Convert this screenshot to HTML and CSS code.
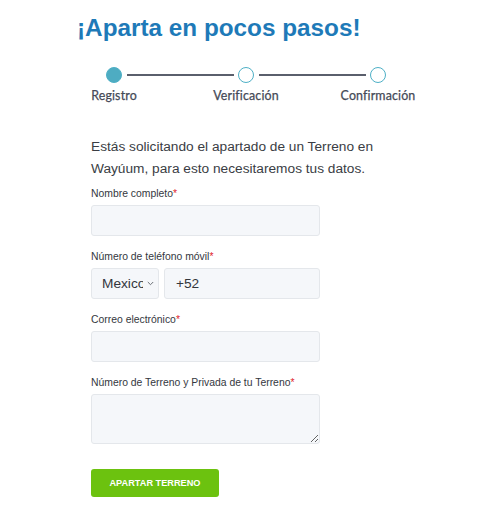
FILE: index.html
```html
<!DOCTYPE html>
<html lang="es">
<head>
<meta charset="utf-8">
<title>Aparta en pocos pasos</title>
<link rel="stylesheet" href="styles.css">
</head>
<body>
<main class="page">
  <h1 class="title">¡Aparta en pocos pasos!</h1>

  <div class="stepper">
    <div class="step step--active">
      <span class="dot"></span>
      <span class="step-label">Registro</span>
    </div>
    <span class="connector"></span>
    <div class="step">
      <span class="dot"></span>
      <span class="step-label">Verificación</span>
    </div>
    <span class="connector"></span>
    <div class="step">
      <span class="dot"></span>
      <span class="step-label">Confirmación</span>
    </div>
  </div>

  <form class="form">
    <p class="intro">Estás solicitando el apartado de un Terreno en Wayúum, para esto necesitaremos tus datos.</p>

    <div class="field">
      <label class="label">Nombre completo<span class="req">*</span></label>
      <input class="input" type="text">
    </div>

    <div class="field">
      <label class="label">Número de teléfono móvil<span class="req">*</span></label>
      <div class="phone-row">
        <div class="select-wrap">
          <select class="input select">
            <option>Mexico</option>
          </select>
          <svg class="chevron" width="7" height="5" viewBox="0 0 7 5"><path d="M0.8 1 L3.5 3.7 L6.2 1" fill="none" stroke="#6b6f76" stroke-width="1"/></svg>
        </div>
        <input class="input phone" type="text" value="+52">
      </div>
    </div>

    <div class="field">
      <label class="label">Correo electrónico<span class="req">*</span></label>
      <input class="input" type="text">
    </div>

    <div class="field">
      <label class="label">Número de Terreno y Privada de tu Terreno<span class="req">*</span></label>
      <textarea class="input textarea"></textarea>
    </div>

    <button class="submit" type="button">APARTAR TERRENO</button>
  </form>
</main>
</body>
</html>
```

FILE: styles.css
```css
* { box-sizing: border-box; }

html, body {
  margin: 0;
  padding: 0;
  background: #ffffff;
}

body {
  font-family: "Liberation Sans", Arial, sans-serif;
  color: #33363d;
}

.page {
  padding-left: 77px;
  padding-top: 14px;
}

.title {
  margin: 0;
  font-size: 24.3px;
  line-height: 28px;
  font-weight: bold;
  color: #1e7ab8;
}

/* Stepper */
.stepper {
  display: flex;
  align-items: flex-start;
  margin-top: 25px;
  margin-left: 29px;
  width: 280px;
}

.step {
  width: 16px;
  display: flex;
  flex-direction: column;
  align-items: center;
}

.dot {
  width: 16px;
  height: 16px;
  border-radius: 50%;
  border: 1.5px solid #4eb0c6;
  background: #ffffff;
}

.step--active .dot {
  background: #4eacc2;
}

.step-label {
  margin-top: 5px;
  white-space: nowrap;
  font-family: Lato, "Noto Sans", sans-serif;
  font-size: 12.4px;
  line-height: 15px;
  color: #454a57;
  letter-spacing: 0.15px;
  -webkit-text-stroke: 0.25px #454a57;
}

.connector {
  flex: 1;
  height: 2px;
  margin: 7px 4.5px 0;
  background: #5a5f6c;
}

/* Form */
.form {
  padding-left: 14px;
  width: 314px;
}

.intro {
  margin: 33px 0 0;
  font-size: 13.7px;
  line-height: 21.6px;
  color: #3a3d44;
}

.field {
  margin-top: 7.6px;
}

.field + .field {
  margin-top: 14px;
}

.label {
  display: block;
  margin-bottom: 4px;
  font-size: 10.4px;
  line-height: 14px;
  color: #34373e;
}

.req {
  color: #e0242b;
}

.input {
  display: block;
  width: 229px;
  height: 31px;
  margin: 0;
  padding: 0 11px;
  border: 1px solid #e4e7eb;
  border-radius: 3px;
  background: #f5f7fa;
  font-family: "Liberation Sans", Arial, sans-serif;
  font-size: 13.7px;
  color: #33363d;
  outline: none;
}

.phone-row {
  display: flex;
  gap: 5px;
}

.select-wrap {
  position: relative;
  width: 68px;
}

.select {
  width: 68px;
  padding: 0 15px 0 10px;
  -webkit-appearance: none;
  appearance: none;
  text-overflow: clip;
  cursor: pointer;
}

.chevron {
  position: absolute;
  right: 5px;
  top: 13px;
  pointer-events: none;
}

.phone {
  width: 156px;
}

.textarea {
  height: 50px;
  padding: 6px 11px;
  resize: vertical;
}

.submit {
  display: block;
  margin-top: 25px;
  width: 128px;
  height: 28px;
  padding: 0;
  border: none;
  border-radius: 3px;
  background: #6cc20f;
  color: #ffffff;
  font-family: "Liberation Sans", Arial, sans-serif;
  font-size: 9.2px;
  font-weight: bold;
  cursor: pointer;
}
```
